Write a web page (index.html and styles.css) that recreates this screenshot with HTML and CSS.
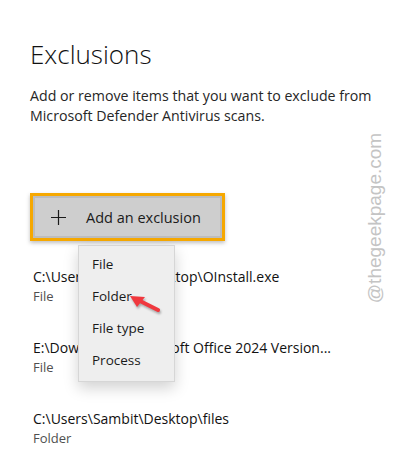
FILE: index.html
```html
<!doctype html>
<html lang="en">
  <head>
    <meta charset="UTF-8" />
    <meta name="viewport" content="width=device-width, initial-scale=1.0" />
    <title>Exclusions</title>
    <link rel="stylesheet" href="styles.css">
  </head>
  <body>
    <div class="page">
      <h1>Exclusions</h1>
      <p class="intro">Add or remove items that you want to exclude from<br>Microsoft Defender Antivirus scans.</p>

      <div class="add-wrap">
        <button class="add-btn">
          <svg class="plus" width="15" height="15" viewBox="0 0 15 15">
            <path d="M7.5 0v15M0 7.5h15" stroke="#1a1a1a" stroke-width="1.2" fill="none" />
          </svg>
          <span>Add an exclusion</span>
        </button>

        <!-- dropdown opened from the button -->
        <ul class="menu">
          <li>File</li>
          <li>Folder</li>
          <li>File type</li>
          <li>Process</li>
        </ul>

        <svg class="pointer" width="40" height="24" viewBox="0 0 40 24">
          <path d="M30 17 L10 7" stroke="#f0383e" stroke-width="4" stroke-linecap="round" />
          <path d="M2 3 L17 4 L9 14 Z" fill="#f0383e" />
        </svg>
      </div>

      <ul class="exclusions">
        <li>
          <div class="path">C:\Users\Sambit\Desktop\OInstall.exe</div>
          <div class="kind">File</div>
        </li>
        <li>
          <div class="path">E:\Downloads\Microsoft Office 2024 Version...</div>
          <div class="kind">File</div>
        </li>
        <li>
          <div class="path">C:\Users\Sambit\Desktop\files</div>
          <div class="kind">Folder</div>
        </li>
      </ul>
    </div>

    <div class="watermark">@thegeekpage.com</div>
  </body>
</html>
```

FILE: styles.css
```css
body {
  margin: 0;
  padding: 0;
  font-family: "Open Sans", "Noto Sans", sans-serif;
  background-color: #ffffff;
  color: #000000;
}

.page {
  padding: 34px 0 0 30px;
  position: relative;
}

h1 {
  margin: 0;
  font-size: 26px;
  font-weight: 300;
  line-height: 40px;
  color: #111111;
}

.intro {
  margin: 12px 0 0 0;
  font-size: 14.2px;
  line-height: 20px;
  color: #262626;
}

/* Add button with highlight box */
.add-wrap {
  position: relative;
  margin-top: 67px;
}

.add-btn {
  display: flex;
  align-items: center;
  width: 195px;
  height: 48px;
  padding: 0 0 0 18px;
  box-sizing: border-box;
  background-color: #cecece;
  border: 3px solid #f6a800;
  box-shadow: inset 0 0 0 2px #bdbdbd, 0 2px 4px rgba(0,0,0,0.25);
  font-family: inherit;
  font-size: 14.5px;
  color: #1a1a1a;
  cursor: pointer;
}

.add-btn .plus {
  margin-right: 20px;
}

.menu {
  list-style: none;
  margin: 0;
  padding: 2px 0 0 0;
  position: absolute;
  left: 48px;
  top: 52px;
  width: 97px;
  height: 137px;
  box-sizing: border-box;
  background-color: #eeeeee;
  border: 1px solid #d6d6d6;
  box-shadow: 0 6px 14px rgba(0,0,0,0.18);
  z-index: 10;
}

.menu li {
  height: 32px;
  line-height: 32px;
  padding-left: 13px;
  font-size: 13.5px;
  color: #1a1a1a;
}

.pointer {
  position: absolute;
  left: 98px;
  top: 100px;
  z-index: 11;
  filter: drop-shadow(1px 2px 1px rgba(0,0,0,0.3));
}

/* Existing exclusions */
.exclusions {
  list-style: none;
  margin: 26px 0 0 3px;
  padding: 0;
}

.exclusions li {
  height: 71px;
}

.exclusions li:last-child {
  height: auto;
}

.path {
  font-size: 14px;
  line-height: 20px;
  color: #111111;
}

.kind {
  font-size: 13px;
  line-height: 19px;
  color: #4f4f4f;
}

.watermark {
  position: absolute;
  left: 375px;
  top: 218px;
  transform: translate(-50%, -50%) rotate(-90deg);
  font-family: "Liberation Sans", Arial, sans-serif;
  font-size: 19px;
  color: #c4c4c4;
  white-space: nowrap;
}
```
